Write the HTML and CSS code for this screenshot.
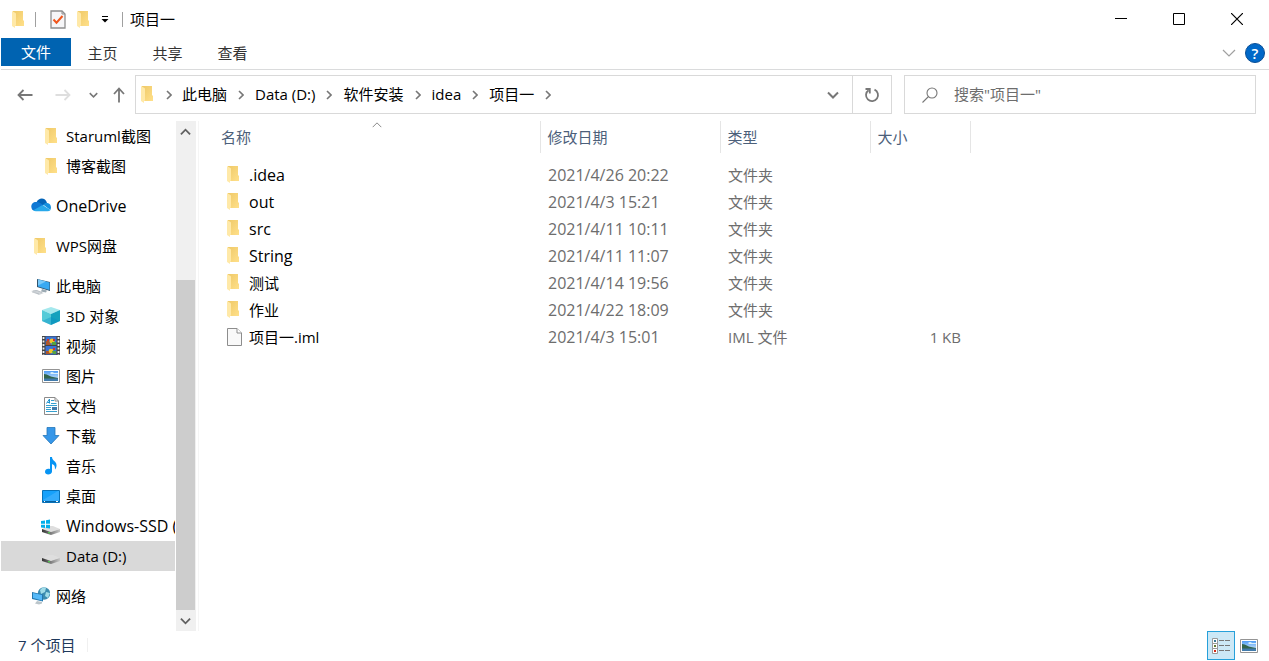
FILE: index.html
```
<!DOCTYPE html>
<html lang="zh-CN">
<head>
<meta charset="utf-8">
<title>项目一</title>
<link rel="stylesheet" href="styles.css">
</head>
<body>
<svg class="sprite" aria-hidden="true">
  <defs>
    <linearGradient id="gold" x1="0" x2="1" y1="0" y2="1"><stop offset="0" stop-color="#efc968"/><stop offset="1" stop-color="#ffe08a"/></linearGradient>
    <linearGradient id="sky" x1="0" x2="0" y1="0" y2="1"><stop offset="0" stop-color="#4f9df5"/><stop offset="1" stop-color="#e4f3fc"/></linearGradient>
    <linearGradient id="drive" x1="0" x2="1"><stop offset="0" stop-color="#333"/><stop offset=".45" stop-color="#777"/><stop offset="1" stop-color="#c8c8c8"/></linearGradient>
  </defs>
  <symbol id="folder" viewBox="0 0 12 18"><path d="M1 0h10v9l1 1v5H1z" fill="url(#gold)"/><path d="M0 0l3.500 2q.5.3.5 1v11.500l-1 .5v2L0 15z" fill="#ffe9a8"/></symbol>
  <symbol id="check-doc" viewBox="0 0 16 19"><path d="M1 1h11l3 3v14H1z" fill="#f6f6f8" stroke="#8e8e8e" stroke-width="1.300"/><path d="M12 1v3h3" fill="none" stroke="#8e8e8e"/><path d="M3.500 9.500l3 3.200 6-6.700" fill="none" stroke="#f0561d" stroke-width="2"/></symbol>
  <symbol id="menu-drop" viewBox="0 0 8 8"><path d="M1 1.500h6" stroke="#000"/><path d="M.5 4h7L4 7.500z"/></symbol>
  <symbol id="arrow-left" viewBox="0 0 16 12"><path d="M15.500 6H1.500M6.500 1L1.500 6l5 5" fill="none" stroke="currentColor" stroke-width="1.800"/></symbol>
  <symbol id="arrow-right" viewBox="0 0 16 12"><path d="M.5 6h14M9.500 1l5 5-5 5" fill="none" stroke="currentColor" stroke-width="1.800"/></symbol>
  <symbol id="arrow-up" viewBox="0 0 12 16"><path d="M6 15.500V1.500M1 7l5-5.500L11 7" fill="none" stroke="currentColor" stroke-width="1.800"/></symbol>
  <symbol id="down" viewBox="0 0 12 8"><path d="M1 1.500l5 5 5-5" fill="none" stroke="currentColor" stroke-width="2"/></symbol>
  <symbol id="thin-down" viewBox="0 0 14 8"><path d="M1 1l6 6 6-6" fill="none" stroke="currentColor" stroke-width="1.200"/></symbol>
  <symbol id="next" viewBox="0 0 6 10"><path d="M1 1l4 4-4 4" fill="none" stroke="currentColor" stroke-width="1.600"/></symbol>
  <symbol id="refresh" viewBox="0 0 16 16"><path d="M4.500 3.200A6 6 0 1 0 10.500 2.600M1.500 2h4.300v4.500" fill="none" stroke="currentColor" stroke-width="1.800"/></symbol>
  <symbol id="search" viewBox="0 0 16 16"><circle cx="10" cy="6" r="5" fill="none" stroke="currentColor" stroke-width="1.100"/><path d="M6.500 9.500l-6 6" stroke="currentColor" stroke-width="1.100"/></symbol>
  <symbol id="cloud" viewBox="0 0 20 14"><path d="M5.500 4.200C8-1 14.500-.5 16 5l-5 3z" fill="#0364b8"/><path d="M1.500 12C-1.500 8 1.500 3.500 5.500 4c2-.2 3.500.7 7 3.200L4 12.500z" fill="#0f78d4"/><path d="M12 6.500c1.500-1.300 3-1.500 4.300-1.500 3.500.5 4.500 4.500 3 7z" fill="#1490df"/><path d="M2 12.400l9.500-5.500 8 5q-1 1.300-3 1.300H5q-2 0-3-.8z" fill="#28a8ea"/></symbol>
  <symbol id="pc" viewBox="0 0 20 18"><path d="M6 1l13 3v9L6 9z" fill="#31536d"/><path d="M7 1.500l11.500 3v7.500L7 8.500z" fill="#38a9f3"/><path d="M7 1.500l8 2-8 4z" fill="#77c9fa"/><path d="M11 11l5 1.500-1 2-5-1z" fill="#9caab3"/><path d="M0 13l5-1 8 3-5 2z" fill="#cfd4d8"/><path d="M2 13l4-.5 5 2M1 14l7 2" fill="none" stroke="#a7afb5" stroke-width=".6"/></symbol>
  <symbol id="cube" viewBox="0 0 18 18"><path d="M0 3l9-3 9 3-9 4z" fill="#a4e8ed"/><path d="M0 3l9 4v11l-9-4z" fill="#55cbd8"/><path d="M18 3L9 7v11l9-4z" fill="#14a1bd"/><path d="M0 14l9-4 9 4-9 4z" fill="#078ec5" opacity=".4"/></symbol>
  <symbol id="film" viewBox="0 0 18 19"><path d="M0 0h18v19H0z" fill="#444"/><path d="M3.500.5h11v8.500h-11zM3.500 10h11v8.500h-11z" fill="#3972d5"/><path d="M4 5h3l2 4H4zM4 15h3l2 3H4z" fill="#af572c"/><circle cx="10" cy="5" r="2.500" fill="#f0c52a"/><circle cx="9" cy="15" r="2.300" fill="#f0c52a"/><path d="M10 6h4v3h-4zM10 15h4v3h-3z" fill="#54a342"/><path d="M5 3h2v2H5zM11 3h2v2h-2zM11 12h2v2h-2z" fill="#d4342c"/><path d="M1.500 1v18M16.500 1v18" stroke="#eee" stroke-width="1.800" stroke-dasharray="2 1.500"/></symbol>
  <symbol id="picture" viewBox="0 0 18 14"><path d="M.5.5h17v13H.5z" fill="#fff" stroke="#949494"/><path d="M2 2h14v10H2z" fill="url(#sky)"/><path d="M2 5c4 0 6 3 9 3l5 1v1H2z" fill="#32654d"/><path d="M2 9.500h14V12H2z" fill="#417bac"/><path d="M8 4q2-2 4 0h4v1H9z" fill="#d9f0fc"/></symbol>
  <symbol id="document" viewBox="0 0 15 18"><path d="M.5.5H11L14.500 4v13.500H.5z" fill="#fff" stroke="#8b8b8b"/><path d="M11 .5V4h3.500" fill="none" stroke="#8b8b8b"/><path d="M2.500 6.500L5.500 2v4.500M3.500 5.500h2" fill="none" stroke="#1e92ce"/><path d="M7 3.500h3M7 6.500h5.500M2 8.500h11M2 10.500h5M2 12.500h5M2 14.500h11" stroke="#36a0cf"/><path d="M8 10h5v3H8z" fill="#417cab"/></symbol>
  <symbol id="download" viewBox="0 0 18 18"><path d="M5 .5h8v8h4L9 17 1 8.500h4z" fill="#3697e9" stroke="#2476b9" stroke-width=".8"/></symbol>
  <symbol id="music" viewBox="0 0 12 18"><path d="M5 0h2c0 4 5 4 4.500 9-.2 2-1 3-1.500 3.500 0-3.500-.5-4.500-3-5.500v7.500C7 18 0 18.500 0 15s3-3.500 5-3z" fill="#0794f3"/></symbol>
  <symbol id="desktop" viewBox="0 0 18 13"><path d="M.5.5h17v12H.5z" fill="#16a1fb" stroke="#0872b9"/><path d="M1 10L16 1h1v10H6z" fill="#41b1fc" opacity=".7"/><path d="M1 11.500h16" stroke="#075f9c"/><path d="M2 11.500h1M14 11.500h2" stroke="#fff"/></symbol>
  <symbol id="disk" viewBox="0 0 18 9"><path d="M0 3l6-3h5l7 3-9 3z" fill="#dedede"/><path d="M0 3l9 3 9-3v3L9 9 0 6z" fill="url(#drive)"/><path d="M6 6.200h2v1H6z" fill="#49e547"/></symbol>
  <symbol id="system-disk" viewBox="0 0 20 16"><path d="M1 10l6-3h5l7 3-9 3z" fill="#dedede"/><path d="M1 10l9 3 9-3v3l-9 3-9-3z" fill="url(#drive)"/><path d="M7 13.200h2v1H7z" fill="#49e547"/><path d="M0 2l4-.6v3.400H0zM5 1.200L9 .6v4.200H5zM0 5.800h4V9L0 8.500zM5 5.800h4v3.800L5 9z" fill="#00aeea"/></symbol>
  <symbol id="network" viewBox="0 0 18 18"><circle cx="12" cy="6.500" r="6.200" fill="#3c8caf"/><path d="M8 3q3-4 6-2l-1 4-4 2zM14 5l4 1-2 5-3-2z" fill="#a1dce8"/><path d="M0 5l11 2.500v7L0 12z" fill="#2477ad"/><path d="M1 6l9 2v5.500L1 11z" fill="#55b9f8"/><path d="M5 14l5 1v1.500l-3 1-4-1z" fill="#bbc5ca"/></symbol>
  <symbol id="file" viewBox="0 0 15 18"><path d="M.5.5h9.500l4.500 4.500v12.500H.5z" fill="#f9f9f9" stroke="#8d8d8d"/><path d="M10 .5V5h4.500" fill="#fff" stroke="#8d8d8d"/></symbol>
  <symbol id="details" viewBox="0 0 18 16"><path d="M.5.500h5v5h-5zM.5 5.500h5v5h-5zM.5 10.500h5v5h-5z" fill="#fff" stroke="#999"/><path d="M2 2h2v2H2z" fill="#3b7994"/><path d="M2 7h2v2H2z" fill="#617a31"/><path d="M2 12h2v2H2z" fill="#d32a16"/><path d="M7 2.500h5M13 2.500h5M7 7.500h5M13 7.500h5M7 12.500h5M13 12.500h5" stroke="#777"/></symbol>
</svg>

<div class="window">
  <header class="titlebar">
    <svg class="folder"><use href="#folder"/></svg>
    <span class="divider"></span>
    <button class="quick" aria-label="属性"><svg class="check-doc"><use href="#check-doc"/></svg></button>
    <button class="quick quick-folder" aria-label="新建文件夹"><svg class="folder"><use href="#folder"/></svg></button>
    <button class="quick quick-menu" aria-label="自定义快速访问工具栏"><svg class="menu-drop"><use href="#menu-drop"/></svg></button>
    <span class="divider divider-title"></span>
    <h1 class="title">项目一</h1>
    <div class="controls">
      <button class="control" aria-label="最小化"><svg class="control-icon" viewBox="0 0 12 12"><path d="M0 5.500h12" stroke="#000"/></svg></button>
      <button class="control" aria-label="最大化"><svg class="control-icon" viewBox="0 0 12 12"><path d="M.5.5h11v11H.5z" fill="none" stroke="#000"/></svg></button>
      <button class="control" aria-label="关闭"><svg class="control-icon" viewBox="0 0 12 12"><path d="M0 0l12 12M12 0L0 12" stroke="#000" stroke-width="1.200"/></svg></button>
    </div>
  </header>

  <nav class="ribbon">
    <button class="tab tab-file">文件</button>
    <button class="tab">主页</button>
    <button class="tab">共享</button>
    <button class="tab">查看</button>
    <button class="expand" aria-label="展开功能区"><svg class="thin-down"><use href="#thin-down"/></svg></button>
    <button class="help" aria-label="帮助">?</button>
  </nav>

  <div class="navbar">
    <button class="nav nav-back" aria-label="返回"><svg class="arrow-x"><use href="#arrow-left"/></svg></button>
    <button class="nav nav-forward" aria-label="前进" disabled><svg class="arrow-x"><use href="#arrow-right"/></svg></button>
    <button class="nav nav-recent" aria-label="最近浏览的位置"><svg class="small-down"><use href="#down"/></svg></button>
    <button class="nav nav-up" aria-label="上移"><svg class="arrow-y"><use href="#arrow-up"/></svg></button>
    <div class="address">
      <svg class="folder"><use href="#folder"/></svg>
      <svg class="next next-first"><use href="#next"/></svg>
      <a class="crumb" href="#">此电脑</a><svg class="next"><use href="#next"/></svg>
      <a class="crumb" href="#">Data (D:)</a><svg class="next"><use href="#next"/></svg>
      <a class="crumb" href="#">软件安装</a><svg class="next"><use href="#next"/></svg>
      <a class="crumb" href="#">idea</a><svg class="next"><use href="#next"/></svg>
      <a class="crumb" href="#">项目一</a><svg class="next"><use href="#next"/></svg>
      <button class="history" aria-label="以前的位置"><svg class="down"><use href="#down"/></svg></button>
      <button class="refresh" aria-label="刷新"><svg class="glyph"><use href="#refresh"/></svg></button>
    </div>
    <label class="search">
      <svg class="glyph"><use href="#search"/></svg>
      <input class="search-input" type="text" aria-label="搜索" placeholder='搜索"项目一"'>
    </label>
  </div>

  <div class="body">
    <aside class="tree">
      <ul class="group">
        <li><a class="node child" href="#"><svg class="slot"><use href="#folder" x="4" y="3" width="12" height="18"/></svg>Staruml截图</a></li>
        <li><a class="node child" href="#"><svg class="slot"><use href="#folder" x="4" y="3" width="12" height="18"/></svg>博客截图</a></li>
      </ul>
      <ul class="group"><li><a class="node latin" href="#"><svg class="slot"><use href="#cloud" x="0" y="3" width="20" height="14"/></svg>OneDrive</a></li></ul>
      <ul class="group"><li><a class="node" href="#"><svg class="slot"><use href="#folder" x="3" y="3" width="12" height="18"/></svg>WPS网盘</a></li></ul>
      <ul class="group">
        <li><a class="node" href="#"><svg class="slot"><use href="#pc" x="0" y="3" width="20" height="18"/></svg>此电脑</a></li>
        <li><a class="node child" href="#"><svg class="slot"><use href="#cube" x="1" y="2" width="18" height="18"/></svg>3D 对象</a></li>
        <li><a class="node child" href="#"><svg class="slot"><use href="#film" x="1" y="1" width="18" height="19"/></svg>视频</a></li>
        <li><a class="node child" href="#"><svg class="slot"><use href="#picture" x="1" y="4" width="18" height="14"/></svg>图片</a></li>
        <li><a class="node child" href="#"><svg class="slot"><use href="#document" x="3" y="2" width="15" height="18"/></svg>文档</a></li>
        <li><a class="node child" href="#"><svg class="slot"><use href="#download" x="1" y="2" width="18" height="18"/></svg>下载</a></li>
        <li><a class="node child" href="#"><svg class="slot"><use href="#music" x="4" y="2" width="12" height="18"/></svg>音乐</a></li>
        <li><a class="node child" href="#"><svg class="slot"><use href="#desktop" x="1" y="5" width="18" height="13"/></svg>桌面</a></li>
        <li><a class="node child latin" href="#"><svg class="slot"><use href="#system-disk" x="0" y="4" width="20" height="16"/></svg>Windows-SSD (C:)</a></li>
        <li><a class="node child selected" href="#"><svg class="slot"><use href="#disk" x="1" y="10" width="18" height="9"/></svg>Data (D:)</a></li>
      </ul>
      <ul class="group"><li><a class="node" href="#"><svg class="slot"><use href="#network" x="1" y="2" width="18" height="18"/></svg>网络</a></li></ul>
    </aside>
    <div class="scrollbar">
      <button class="scroll-button" aria-label="向上滚动"><svg class="scroll-icon flip"><use href="#down"/></svg></button>
      <div class="scroll-space"></div>
      <div class="thumb"></div>
      <button class="scroll-button" aria-label="向下滚动"><svg class="scroll-icon"><use href="#down"/></svg></button>
    </div>
    <main class="files">
      <table class="list">
        <colgroup><col class="col-name"><col class="col-date"><col class="col-type"><col class="col-size"><col></colgroup>
        <thead>
          <tr>
            <th scope="col" class="name-head">名称<svg class="sort flip"><use href="#thin-down"/></svg></th>
            <th scope="col">修改日期</th><th scope="col">类型</th><th scope="col">大小</th><td></td>
          </tr>
        </thead>
        <tbody>
          <tr><td><span class="entry latin"><svg class="entry-icon"><use href="#folder" width="12" height="18"/></svg>.idea</span></td><td class="latin">2021/4/26 20:22</td><td>文件夹</td><td></td></tr>
          <tr><td><span class="entry latin"><svg class="entry-icon"><use href="#folder" width="12" height="18"/></svg>out</span></td><td class="latin">2021/4/3 15:21</td><td>文件夹</td><td></td></tr>
          <tr><td><span class="entry latin"><svg class="entry-icon"><use href="#folder" width="12" height="18"/></svg>src</span></td><td class="latin">2021/4/11 10:11</td><td>文件夹</td><td></td></tr>
          <tr><td><span class="entry latin"><svg class="entry-icon"><use href="#folder" width="12" height="18"/></svg>String</span></td><td class="latin">2021/4/11 11:07</td><td>文件夹</td><td></td></tr>
          <tr><td><span class="entry"><svg class="entry-icon"><use href="#folder" width="12" height="18"/></svg>测试</span></td><td class="latin">2021/4/14 19:56</td><td>文件夹</td><td></td></tr>
          <tr><td><span class="entry"><svg class="entry-icon"><use href="#folder" width="12" height="18"/></svg>作业</span></td><td class="latin">2021/4/22 18:09</td><td>文件夹</td><td></td></tr>
          <tr><td><span class="entry"><svg class="entry-icon"><use href="#file" width="15" height="18"/></svg>项目一.iml</span></td><td class="latin">2021/4/3 15:01</td><td>IML 文件</td><td class="size">1 KB</td></tr>
        </tbody>
      </table>
    </main>
  </div>

  <footer class="status">
    <span class="count">7 个项目</span>
    <div class="views">
      <button class="view active" aria-label="详细信息"><svg class="details"><use href="#details"/></svg></button>
      <button class="view" aria-label="大图标"><svg class="picture"><use href="#picture"/></svg></button>
    </div>
  </footer>
</div>
</body>
</html>
```

FILE: styles.css
```
* { box-sizing: border-box; }
body {
  margin: 0;
  background: #fff;
  color: #000;
  font: 15px/20px "Open Sans", "Noto Sans CJK SC", sans-serif;
}
button { border: 0; padding: 0; background: none; color: inherit; font: inherit; }
a { color: inherit; text-decoration: none; }
ul { margin: 0; padding: 0; list-style: none; }
svg { display: block; flex: none; }
.sprite { position: absolute; width: 0; height: 0; }
.latin { font-size: 16px; }
.flip { transform: rotate(180deg); }
.folder { width: 12px; height: 18px; }

.window { display: flex; flex-direction: column; min-height: 100vh; padding-left: 1px; }

.titlebar { display: flex; align-items: center; height: 38px; padding-left: 11px; }
.titlebar .folder { margin-top: 2px; }
.divider { width: 1px; height: 15px; margin: 0 14px 0 11px; background: #a0a0a0; }
.divider-title { margin: 0 7px 0 13px; }
.check-doc { width: 16px; height: 19px; }
.quick-folder { margin-left: 11px; }
.quick-menu { margin-left: 12px; }
.menu-drop { width: 8px; height: 8px; }
.title { margin: 0; font-size: 15px; font-weight: 400; }
.controls { display: flex; margin-left: auto; padding-right: 3px; }
.control { display: grid; place-items: center; width: 58px; height: 38px; }
.control-icon { width: 12px; height: 12px; }

.ribbon { display: flex; align-items: flex-start; height: 32px; padding-right: 4px; border-bottom: 1px solid #dadbdc; color: #333; }
.tab { width: 65px; height: 28px; padding: 2px 2px 0 0; }
.tab-file { width: 70px; padding: 0; background: #0063b1; color: #fff; }
.expand { margin: 11px 0 0 auto; color: #a0a0a0; }
.thin-down { width: 14px; height: 8px; }
.help { width: 20px; height: 20px; margin: 5px 0 0 9px; border: 1px solid #0a4f96; border-radius: 50%; background: #0068c8; color: #fff; font-weight: 600; line-height: 18px; }

.navbar { display: flex; align-items: center; height: 51px; padding: 0 13px 2px 0; color: #777; }
.nav { display: grid; place-items: center; height: 38px; }
.nav-back { width: 48px; }
.nav-forward { width: 28px; color: #dedede; }
.nav-recent { width: 32px; }
.nav-up { width: 20px; margin-right: 6px; }
.arrow-x { width: 16px; height: 12px; }
.arrow-y { width: 12px; height: 16px; }
.small-down { width: 9px; height: 6px; }
.address { display: flex; flex: 1; align-items: center; height: 39px; padding-left: 5px; border: 1px solid #d9d9d9; }
.crumb { padding-bottom: 2px; color: #000; white-space: nowrap; }
.next { width: 6px; height: 10px; margin: 0 11px; }
.next-first { margin: 0 10px 0 13px; }
.history { display: grid; place-items: center; width: 38px; height: 37px; margin-left: auto; }
.down { width: 12px; height: 8px; }
.refresh { display: grid; place-items: center; width: 39px; height: 37px; border-left: 1px solid #d9d9d9; }
.glyph { width: 16px; height: 16px; }
.search { display: flex; align-items: center; width: 352px; height: 39px; margin-left: 12px; padding-left: 17px; border: 1px solid #d9d9d9; }
.search-input { flex: 1; min-width: 0; margin-left: 16px; padding: 0 0 2px; border: 0; outline: 0; font: inherit; }
.search-input::placeholder { color: #6d6d6d; opacity: 1; }

.body { display: flex; flex: 1; }
.tree { display: flex; flex-direction: column; gap: 10px; width: 174px; overflow: hidden; }
.node { display: flex; align-items: center; gap: 5px; height: 30px; padding-left: 30px; white-space: nowrap; }
.child { padding-left: 40px; }
.selected { background: #d9d9d9; }
.slot { width: 20px; height: 22px; }
.scrollbar { display: flex; flex-direction: column; width: 20px; margin: 0 2px 0 1px; background: #f0f0f0; color: #606060; }
.scroll-button { display: grid; place-items: center; width: 19px; height: 21px; }
.scroll-icon { width: 11px; height: 8px; }
.scroll-space { flex: 138; }
.thumb { flex: 330; width: 19px; background: #cdcdcd; }
.files { flex: 1; border-left: 1px solid #f5f5f5; }
.list { width: 100%; border-collapse: collapse; table-layout: fixed; color: #6d6d6d; }
.col-name { width: 341px; }
.col-date { width: 180px; }
.col-type { width: 150px; }
.col-size { width: 100px; }
.list th { height: 32px; padding: 0 0 0 7px; border-right: 1px solid #e5e5e5; color: #4c607a; font-weight: 400; text-align: left; }
.list .name-head { position: relative; padding-left: 22px; }
.sort { position: absolute; top: 1px; left: 173px; width: 10px; height: 6px; color: #777; }
.list tbody::before { content: ""; display: block; height: 8px; }
.list td { height: 27px; padding: 0 9px 0 8px; white-space: nowrap; }
.list td:first-child { padding-left: 28px; }
.entry { display: flex; align-items: center; gap: 7px; color: #000; }
.entry-icon { width: 15px; height: 18px; }
.list .size { text-align: right; }

.status { display: flex; align-items: center; height: 30px; padding: 0 6px 1px 17px; color: #1e395b; }
.count { margin-bottom: 2px; padding-right: 12px; border-right: 1px solid #f0f0f0; line-height: 14px; }
.views { display: flex; margin-left: auto; }
.view { display: grid; place-items: center; width: 28px; height: 29px; }
.active { border: 1px solid #26a0da; background: #cce8f6; }
.details { width: 18px; height: 16px; }
.picture { width: 18px; height: 14px; }
```
